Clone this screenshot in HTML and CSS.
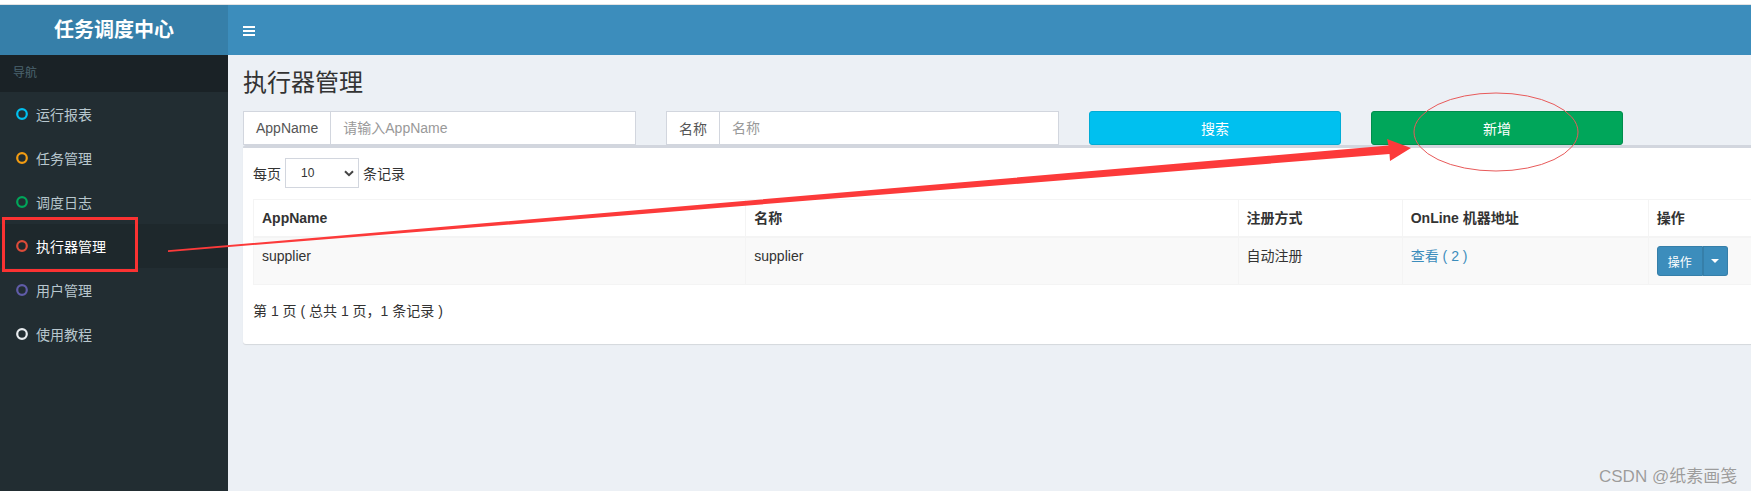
FILE: index.html
```html
<!DOCTYPE html>
<html>
<head>
    <meta charset="utf-8">
    <title>任务调度中心</title>
    <link rel="stylesheet" href="styles.css">
</head>
<body>
    <div class="top-strip"></div>
    <header class="main-header">
        <div class="logo">任务调度中心</div>
        <nav class="navbar">
            <a class="sidebar-toggle">
                <svg width="12" height="10" viewBox="0 0 12 10">
                    <rect x="0" y="0" width="12" height="2" fill="#fff"/>
                    <rect x="0" y="4" width="12" height="2" fill="#fff"/>
                    <rect x="0" y="8" width="12" height="2" fill="#fff"/>
                </svg>
            </a>
        </nav>
    </header>

    <div class="body-wrap">
        <!-- Sidebar -->
        <aside class="sidebar">
            <div class="nav-header">导航</div>
            <a class="nav-item"><svg class="ring" viewBox="0 0 12 12"><circle cx="6" cy="6" r="4.8" stroke="#00c0ef"/></svg><span>运行报表</span></a>
            <a class="nav-item"><svg class="ring" viewBox="0 0 12 12"><circle cx="6" cy="6" r="4.8" stroke="#f39c12"/></svg><span>任务管理</span></a>
            <a class="nav-item"><svg class="ring" viewBox="0 0 12 12"><circle cx="6" cy="6" r="4.8" stroke="#00a65a"/></svg><span>调度日志</span></a>
            <a class="nav-item active"><svg class="ring" viewBox="0 0 12 12"><circle cx="6" cy="6" r="4.8" stroke="#dd4b39"/></svg><span>执行器管理</span></a>
            <a class="nav-item"><svg class="ring" viewBox="0 0 12 12"><circle cx="6" cy="6" r="4.8" stroke="#605ca8"/></svg><span>用户管理</span></a>
            <a class="nav-item"><svg class="ring" viewBox="0 0 12 12"><circle cx="6" cy="6" r="4.8" stroke="#e8ecef"/></svg><span>使用教程</span></a>
        </aside>

        <!-- Content -->
        <main class="content-wrapper">
            <div class="content-header">
                <h1>执行器管理</h1>
            </div>
            <div class="content">
                <div class="search-row">
                    <div class="input-group">
                        <span class="addon">AppName</span>
                        <input type="text" class="form-control" placeholder="请输入AppName">
                    </div>
                    <div class="input-group">
                        <span class="addon">名称</span>
                        <input type="text" class="form-control" placeholder="名称">
                    </div>
                    <button class="btn btn-info">搜索</button>
                    <button class="btn btn-success">新增</button>
                </div>

                <div class="box">
                    <div class="box-body">
                        <div class="length-row">
                            <span>每页</span>
                            <span class="select-wrap">
                                <select>
                                    <option>10</option>
                                    <option>25</option>
                                    <option>50</option>
                                </select>
                                <svg class="chevron" width="10" height="7" viewBox="0 0 10 7">
                                    <path d="M1 1.2 L5 5.2 L9 1.2" fill="none" stroke="#444" stroke-width="2"/>
                                </svg>
                            </span>
                            <span>条记录</span>
                        </div>

                        <table class="data-table">
                            <colgroup>
                                <col style="width: 30%">
                                <col style="width: 30%">
                                <col style="width: 10%">
                                <col style="width: 15%">
                                <col style="width: 15%">
                            </colgroup>
                            <thead>
                                <tr>
                                    <th>AppName</th>
                                    <th>名称</th>
                                    <th>注册方式</th>
                                    <th>OnLine 机器地址</th>
                                    <th>操作</th>
                                </tr>
                            </thead>
                            <tbody>
                                <tr>
                                    <td>supplier</td>
                                    <td>supplier</td>
                                    <td>自动注册</td>
                                    <td><a class="link">查看 ( 2 )</a></td>
                                    <td>
                                        <div class="btn-group">
                                            <button class="btn-sm">操作</button>
                                            <button class="btn-sm caret-btn"><span class="caret"></span></button>
                                        </div>
                                    </td>
                                </tr>
                            </tbody>
                        </table>

                        <div class="table-info">第 1 页 ( 总共 1 页，1 条记录 )</div>
                    </div>
                </div>
            </div>
        </main>
    </div>

    <!-- screenshot annotations -->
    <svg class="annotations" width="1751" height="491" viewBox="0 0 1751 491">
        <rect x="3.5" y="218.5" width="133" height="52" fill="none" stroke="#fb3232" stroke-width="3"/>
        <polygon points="168,250.3 1388.5,145.6 1387,139 1411,148 1390,161 1389.5,154 168,251.9" fill="#fc3a3a"/>
        <ellipse cx="1496" cy="132" rx="82" ry="39" fill="none" stroke="#e85a5a" stroke-width="1"/>
    </svg>
    <div class="watermark">CSDN @纸素画笺</div>
</body>
</html>
```

FILE: styles.css
```css
html, body {
    height: 100%;
    margin: 0;
}

body {
    width: 1920px;
    overflow: hidden;
    position: relative;
    font-family: 'Liberation Sans', 'Noto Sans CJK SC', sans-serif;
    font-size: 14px;
    color: #333;
    background: #ecf0f5;
}

.top-strip {
    height: 4px;
    background: #fff;
    border-bottom: 1px solid #e3e3e3;
}

.main-header {
    display: flex;
    height: 50px;
}

.logo {
    width: 228px;
    background: #367fa9;
    color: #fff;
    font-size: 20px;
    font-weight: bold;
    line-height: 50px;
    text-align: center;
}

.navbar {
    flex: 1;
    background: #3c8dbc;
    display: flex;
    align-items: center;
}

.sidebar-toggle {
    display: flex;
    padding: 0 15px;
    margin-top: 2px;
}

.body-wrap {
    display: flex;
    height: calc(100% - 55px);
}

/* sidebar */
.sidebar {
    width: 228px;
    flex-shrink: 0;
    background: #222d32;
}

.nav-header {
    height: 37px;
    line-height: 37px;
    padding-left: 13px;
    background: #1a2226;
    color: #4b646f;
    font-size: 12px;
}

.nav-item {
    height: 44px;
    display: flex;
    align-items: center;
    gap: 8px;
    padding-left: 16px;
    color: #b8c7ce;
    font-size: 14px;
}

.nav-item.active {
    background: #1e282c;
    color: #fff;
}

.ring {
    width: 12px;
    height: 12px;
}

.ring circle {
    fill: none;
    stroke-width: 2.2;
}

/* content */
.content-wrapper {
    flex: 1;
}

.content-header {
    padding: 15px 15px 0;
}

.content-header h1 {
    margin: 0;
    font-size: 24px;
    font-weight: normal;
    line-height: 26px;
}

.content {
    padding: 15px;
}

.search-row {
    display: grid;
    grid-template-columns: 393px 393px 252px 252px;
    column-gap: 30px;
}

.input-group {
    display: flex;
    height: 34px;
}

.addon {
    display: flex;
    align-items: center;
    padding: 0 12px;
    border: 1px solid #d2d6de;
    background: #fff;
    color: #555;
}

.form-control {
    flex: 1;
    min-width: 0;
    padding: 0 12px;
    border: 1px solid #d2d6de;
    border-left: none;
    font-family: inherit;
    font-size: 14px;
    color: #555;
    outline: none;
}

.form-control::placeholder {
    color: #999;
}

.btn {
    height: 34px;
    border: 1px solid;
    border-radius: 3px;
    color: #fff;
    font-family: inherit;
    font-size: 14px;
    cursor: pointer;
}

.btn-info {
    background: #00c0ef;
    border-color: #00acd6;
}

.btn-success {
    background: #00a65a;
    border-color: #008d4c;
}

.box {
    background: #fff;
    border-top: 3px solid #d2d6de;
    border-radius: 3px;
    box-shadow: 0 1px 1px rgba(0, 0, 0, 0.1);
}

.box-body {
    padding: 10px;
}

.length-row {
    display: flex;
    align-items: center;
    gap: 4px;
    height: 30px;
    margin-bottom: 11px;
}

.select-wrap {
    position: relative;
    width: 74px;
    height: 30px;
}

.select-wrap select {
    width: 100%;
    height: 30px;
    appearance: none;
    -webkit-appearance: none;
    padding: 0 0 0 15px;
    border: 1px solid #d2d6de;
    background: #fff;
    color: #333;
    font-family: inherit;
    font-size: 12px;
    outline: none;
}

.chevron {
    position: absolute;
    right: 5px;
    top: 12px;
    pointer-events: none;
}

.data-table {
    width: 100%;
    border-collapse: collapse;
    border: 1px solid #f4f4f4;
}

.data-table th,
.data-table td {
    border: 1px solid #f4f4f4;
    padding: 8px;
    line-height: 20px;
    text-align: left;
    vertical-align: top;
}

.data-table thead th {
    border-bottom-width: 2px;
    font-weight: bold;
}

.data-table tbody tr {
    background: #f9f9f9;
}

.link {
    color: #3c8dbc;
}

.btn-group {
    display: inline-flex;
}

.btn-sm {
    height: 30px;
    padding: 0 10px;
    background: #3c8dbc;
    border: 1px solid #367fa9;
    border-radius: 3px 0 0 3px;
    color: #fff;
    font-family: inherit;
    font-size: 12px;
}

.caret-btn {
    display: flex;
    align-items: center;
    padding: 0 8px;
    border-left: none;
    border-radius: 0 3px 3px 0;
    box-shadow: inset 1px 0 0 #367fa9;
}

.caret {
    width: 0;
    height: 0;
    border-top: 4px solid #fff;
    border-left: 4px solid transparent;
    border-right: 4px solid transparent;
}

.table-info {
    margin: 16px 0 13px;
    line-height: 20px;
}

/* annotations drawn on the screenshot */
.annotations {
    position: absolute;
    top: 0;
    left: 0;
    pointer-events: none;
}

.watermark {
    position: absolute;
    left: 1599px;
    top: 462px;
    font-size: 17px;
    color: #9c9c9c;
    text-shadow: 0 0 1px rgba(255, 255, 255, 0.8);
    white-space: nowrap;
}
```
